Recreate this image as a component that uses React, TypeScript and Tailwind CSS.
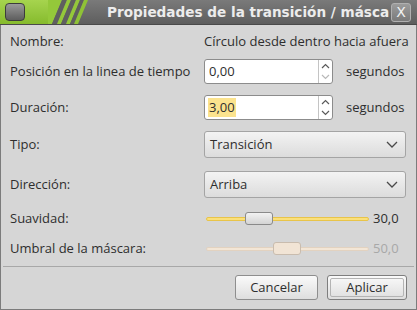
import React from "react";

const font = "font-['Open_Sans',sans-serif]";

const Chevron = ({ up = false, dim = false }: { up?: boolean; dim?: boolean }) => (
  <svg width="9" height="6" viewBox="0 0 9 6" className="block">
    <path
      d={up ? "M1 5 L4.5 1.5 L8 5" : "M1 1 L4.5 4.5 L8 1"}
      fill="none"
      stroke={dim ? "#b8b8b8" : "#5a5a5a"}
      strokeWidth="1.2"
    />
  </svg>
);

const SpinBox = ({ value, highlight = false, downDim = false }: { value: string; highlight?: boolean; downDim?: boolean }) => (
  <div className="flex h-[25px] w-[129px] rounded-[3px] border border-[#8c8c8c] bg-white">
    <div className="flex flex-1 items-center pl-[4px]">
      <span className={highlight ? "bg-[#fbe38e] px-px -mx-px" : ""}>{value}</span>
    </div>
    <div className="flex w-[14px] flex-col items-center justify-center gap-[5px] border-l border-[#c4c4c4]">
      <Chevron up />
      <Chevron dim={downDim} />
    </div>
  </div>
);

const Combo = ({ value }: { value: string }) => (
  <div className="flex h-[27px] w-[202px] items-center justify-between rounded-[3px] border border-[#a4a4a4] bg-gradient-to-b from-[#f3f3f3] to-[#dcdcdc] pl-[5px] pr-[7px]">
    <span>{value}</span>
    <svg width="12" height="7" viewBox="0 0 12 7">
      <path d="M1 1 L6 6 L11 1" fill="none" stroke="#4a4a4a" strokeWidth="1.3" />
    </svg>
  </div>
);

const Slider = ({ pos, disabled = false }: { pos: number; disabled?: boolean }) => (
  <div className="relative h-[14px] w-[163px]">
    <div
      className={
        "absolute left-0 right-0 top-[5px] h-[4px] rounded-full border " +
        (disabled ? "border-[#e2d2c0] bg-[#f3e6d6]" : "border-[#e8c44a] bg-[#fbe07a]")
      }
    />
    <div
      className={
        "absolute top-0 h-[13px] w-[28px] rounded-[3px] border " +
        (disabled
          ? "border-[#c9bcae] bg-[#f1e4d5]"
          : "border-[#8a8a8a] bg-gradient-to-b from-[#f2f2f2] to-[#d4d4d4]")
      }
      style={{ left: pos }}
    />
  </div>
);

export default function App() {
  return (
    <div className={`h-[310px] w-[417px] overflow-hidden bg-[#d6d6d6] text-[13px] text-[#2e2e2e] ${font}`}>
      {/* title bar */}
      <div className="flex h-[25px] border-b border-[#4a4a4a] bg-gradient-to-b from-[#7a7a7a] to-[#5e5e5e]">
        <div className="flex h-full w-[48px] shrink-0 items-center bg-gradient-to-b from-[#a6d44e] to-[#86bb2c] pl-[5px]">
          <div className="h-[18px] w-[20px] rounded-[4px] border border-[#3c3c3c] bg-gradient-to-b from-[#9a9a9a] to-[#5e5e5e]" />
        </div>
        <svg width="50" height="24" viewBox="0 0 50 24" className="block shrink-0">
          <polygon points="0,0 14,0 4,24 0,24" fill="#94c83a" />
          <polygon points="14,0 19,0 9,24 4,24" fill="#5f5f5f" />
          <polygon points="19,0 23,0 13,24 9,24" fill="#94c83a" />
          <polygon points="23,0 28,0 18,24 13,24" fill="#5f5f5f" />
          <polygon points="28,0 32,0 22,24 18,24" fill="#94c83a" />
          <polygon points="32,0 36,0 26,24 22,24" fill="#5f5f5f" />
          <polygon points="36,0 40,0 30,24 26,24" fill="#8fc236" />
        </svg>
        <div className="flex min-w-0 flex-1 items-center overflow-hidden pl-[9px] font-['DejaVu_Sans',sans-serif] text-[13.6px] font-bold whitespace-nowrap text-[#ececec]">
          Propiedades de la transición / másca
        </div>
        <div className="flex shrink-0 items-center pl-[2px] pr-[6px]">
          <div className="flex h-[19px] w-[20px] items-center justify-center rounded-[3px] border border-[#b0b0b0] bg-gradient-to-b from-[#9c9c9c] to-[#7a7a7a] font-['DejaVu_Sans',sans-serif] text-[14px] text-[#f2f2f2]">
            X
          </div>
        </div>
      </div>

      {/* body */}
      <div className="flex h-[285px] flex-col border-x border-b border-[#7c7c7c]">
        <div className="flex flex-col pl-[9px] pr-[9px] whitespace-nowrap">
          <div className="mt-[7px] flex h-[20px] items-center">
            <div className="w-[194px] shrink-0">Nombre:</div>
            <div>Círculo desde dentro hacia afuera</div>
          </div>
          <div className="mt-[7px] flex items-center">
            <div className="w-[194px] shrink-0">Posición en la linea de tiempo</div>
            <SpinBox value="0,00" downDim />
            <div className="pl-[13px]">segundos</div>
          </div>
          <div className="mt-[11px] flex items-center">
            <div className="w-[194px] shrink-0">Duración:</div>
            <SpinBox value="3,00" highlight />
            <div className="pl-[13px]">segundos</div>
          </div>
          <div className="mt-[11px] flex items-center">
            <div className="w-[194px] shrink-0">Tipo:</div>
            <Combo value="Transición" />
          </div>
          <div className="mt-[13px] flex items-center">
            <div className="w-[194px] shrink-0">Dirección:</div>
            <Combo value="Arriba" />
          </div>
          <div className="mt-[11px] flex h-[20px] items-center">
            <div className="w-[196px] shrink-0">Suavidad:</div>
            <Slider pos={39} />
            <div className="pl-[4px]">30,0</div>
          </div>
          <div className="mt-[10px] flex h-[20px] items-center">
            <div className="w-[196px] shrink-0">Umbral de la máscara:</div>
            <Slider pos={67} disabled />
            <div className="pl-[4px] text-[#a8a8a8]">50,0</div>
          </div>
        </div>
        <div className="mx-[2px] mt-[7px] h-px bg-[#a8a8a8]" />
        <div className="mt-[8px] flex justify-end gap-[9px] pr-[9px]">
          <div className="flex h-[25px] w-[83px] items-center justify-center rounded-[3px] border border-[#8e8e8e] bg-gradient-to-b from-[#fafafa] to-[#dedede]">
            Cancelar
          </div>
          <div className="flex h-[25px] w-[80px] rounded-[3px] border border-[#7e7e7e] bg-gradient-to-b from-[#fafafa] to-[#dedede] p-[2px]">
            <div className="flex flex-1 items-center justify-center rounded-[2px] border border-[#b4b4b4]">
              Aplicar
            </div>
          </div>
        </div>
      </div>
    </div>
  );
}
